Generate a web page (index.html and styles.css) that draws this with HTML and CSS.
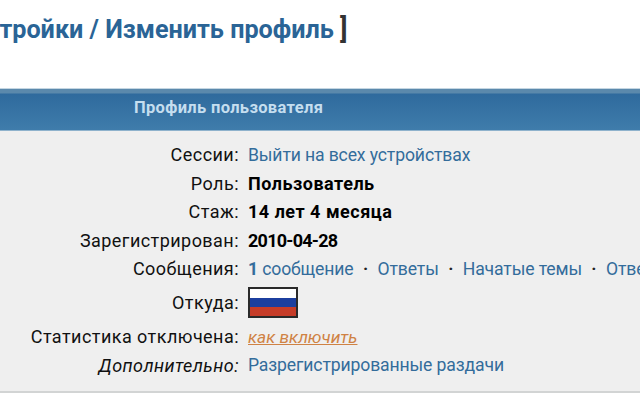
FILE: index.html
```html
<!DOCTYPE html>
<html lang="ru">
<head>
<meta charset="utf-8">
<title>Профиль</title>
<link rel="stylesheet" href="styles.css">
</head>
<body>
<div class="page">
  <h1 class="title"><a class="title-link">Настройки / Изменить профиль</a><span class="bracket">]</span></h1>
  <section class="panel">
    <div class="panel-head"><span class="panel-title">Профиль пользователя</span></div>
    <div class="panel-body">
      <div class="row"><div class="label">Сессии:</div><div class="value"><a class="link">Выйти на всех устройствах</a></div></div>
      <div class="row"><div class="label">Роль:</div><div class="value strong">Пользователь</div></div>
      <div class="row"><div class="label">Стаж:</div><div class="value strong">14 лет 4 месяца</div></div>
      <div class="row"><div class="label">Зарегистрирован:</div><div class="value strong numeric">2010-04-28</div></div>
      <div class="row"><div class="label">Сообщения:</div><div class="value"><a class="link"><b>1</b> сообщение</a><span class="dot">·</span><a class="link">Ответы</a><span class="dot">·</span><a class="link">Начатые темы</a><span class="dot">·</span><a class="link">Ответы</a></div></div>
      <div class="row row-flag"><div class="label">Откуда:</div><div class="value"><span class="flag"><i class="white"></i><i class="blue"></i><i class="red"></i></span></div></div>
      <div class="row"><div class="label">Статистика отключена:</div><div class="value"><a class="warn">как включить</a></div></div>
      <div class="row"><div class="label em">Дополнительно:</div><div class="value"><a class="link">Разрегистрированные раздачи</a></div></div>
    </div>
  </section>
</div>
</body>
</html>
```
FILE: styles.css
```css
html, body { margin: 0; padding: 0; background: #fff; }
body { width: 640px; height: 412px; overflow: hidden; font-family: Roboto, "Liberation Sans", sans-serif; }
.page { width: 640px; height: 412px; overflow: hidden; }
.title { margin: 0 0 0 -45px; height: 88px; padding-top: 13px; box-sizing: border-box; font-size: 25.2px; line-height: 32px; font-weight: 700; white-space: nowrap; }
.title-link { color: #2a6496; }
.bracket { color: #333; margin-left: 6px; font-size: 27px; }
.panel { background: #efefef; border-bottom: 2px solid #d2d4d4; }
.panel-head { height: 43px; box-sizing: border-box; border-top: 1px solid #c4d6e2; border-bottom: 1px solid #8fb2cc; background: linear-gradient(#5b89ac 0, #5b89ac 4px, #2f6a9d 5px, #3f7cab 100%); padding: 8px 0 0 134px; }
.panel-title { color: #c5deef; font-size: 16.5px; letter-spacing: .33px; font-weight: 700; line-height: 22px; }
.panel-body { padding: 9.5px 0 11.5px; }
.row { display: flex; align-items: center; min-height: 28.5px; font-size: 17.3px; white-space: nowrap; }
.row-flag { min-height: 39.5px; }
.label { width: 239px; flex: none; text-align: right; color: #111; font-size: 18px; letter-spacing: .45px; }
.em { font-style: italic; }
.value { margin-left: 9px; color: #000; }
.strong { font-size: 18px; font-weight: 700; letter-spacing: .5px; }
.numeric { letter-spacing: -.75px; }
.link { color: #336c9b; font-size: 17.6px; letter-spacing: -.13px; }
.link b { font-weight: 700; }
.dot { display: inline-block; width: 24px; text-align: center; color: #222; font-weight: 700; }
.warn { color: #cf8244; font-style: italic; text-decoration: underline; }
.flag { display: flex; flex-direction: column; width: 50px; height: 31px; box-sizing: border-box; border: 2px solid #2a2a2a; }
.flag i { flex: 1; display: block; }
.white { background: #fff; }
.blue { background: #1c3f9f; }
.red { background: #c63c28; }
```
